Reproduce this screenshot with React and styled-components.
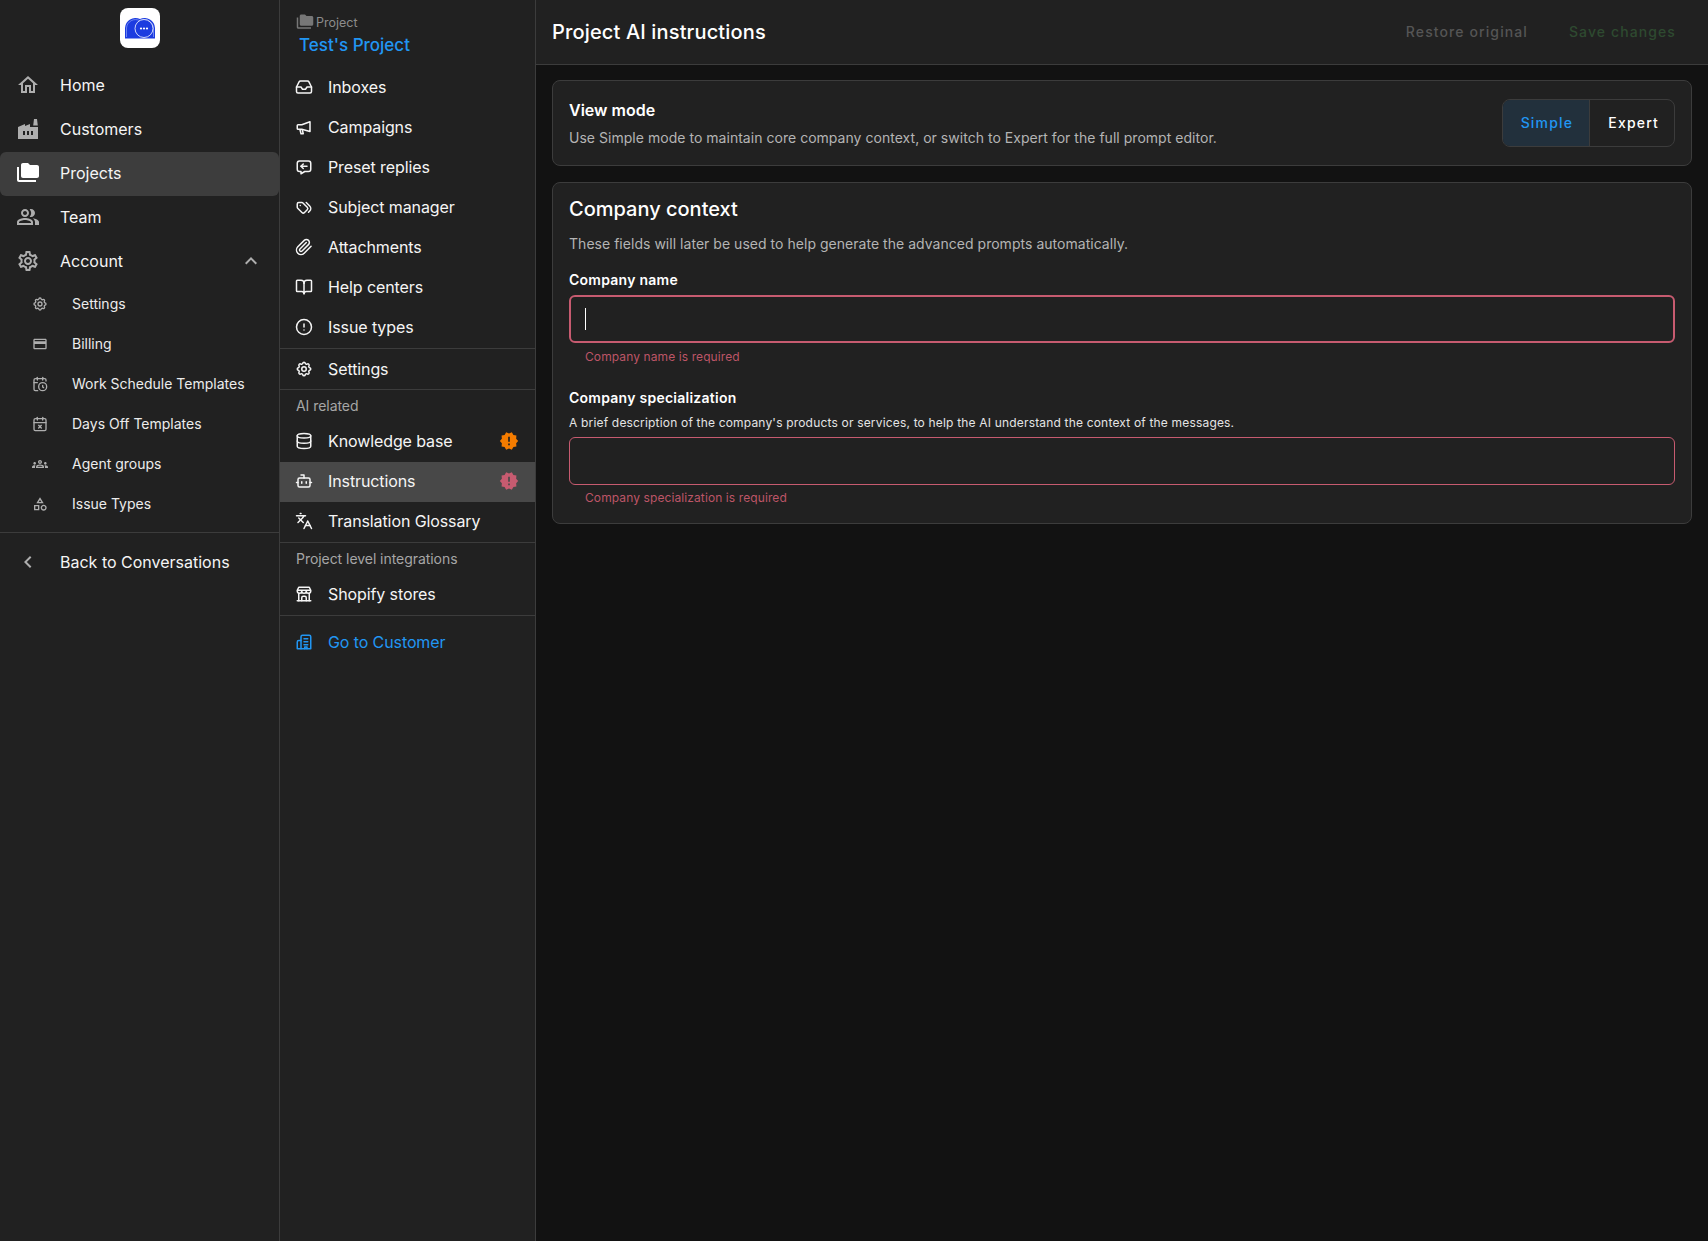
import React from "react"
import styled, { createGlobalStyle } from "styled-components"
import {
  MdOutlineHome,
  MdFactory,
  MdFolderCopy,
  MdOutlinePeopleAlt,
  MdOutlineSettings,
  MdExpandLess,
  MdOutlineCreditCard,
  MdOutlineGroups,
  MdOutlineCategory,
  MdChevronLeft,
  MdNewReleases,
} from "react-icons/md"
import { TbSettings, TbMessageReply, TbTags, TbBuildingStore } from "react-icons/tb"
import {
  LuInbox,
  LuBookOpen,
  LuDatabase,
  LuBot,
  LuLanguages,
  LuPaperclip,
  LuCircleAlert,
  LuCalendarClock,
  LuCalendarX,
} from "react-icons/lu"

const colors = {
  page: "#121212",
  panel: "#212121",
  line: "#3c3c3c",
  blue: "#2196f3",
  red: "#c75b70",
  orange: "#f57c00",
}

const GlobalStyle = createGlobalStyle`
  html, body, #root {
    margin: 0;
    height: 100%;
  }
  body {
    background: ${colors.page};
    color: #f5f5f5;
    font-family: Inter, "Liberation Sans", sans-serif;
  }
`

const Layout = styled.div`
  display: flex;
  height: 1241px;
  overflow: hidden;
`

const MainNav = styled.nav`
  width: 280px;
  flex: none;
  box-sizing: border-box;
  background: ${colors.panel};
  border-right: 1px solid ${colors.line};
  padding-top: 8px;
`

const LogoBox = styled.div`
  width: 40px;
  height: 40px;
  margin: 0 auto 16px;
  background: #fff;
  border-radius: 8px;
  display: flex;
  align-items: center;
  justify-content: center;
`

const NavItem = styled.a`
  display: flex;
  align-items: center;
  box-sizing: border-box;
  height: 44px;
  padding-bottom: 2px;
  font-size: 16px;
  line-height: 1;
  color: #f5f5f5;
  border-radius: 6px;
  background: ${props => (props.$active ? "#3d3d3d" : "transparent")};

  svg {
    width: 24px;
    height: 24px;
    margin-left: 16px;
    margin-right: 20px;
    flex: none;
    color: ${props => (props.$active ? "#fff" : "#aeaeae")};
  }
`

const Chevron = styled(MdExpandLess)`
  && {
    margin-left: auto;
    margin-right: 16px;
  }
`

const SubItem = styled.a`
  display: flex;
  align-items: center;
  height: 40px;
  font-size: 14px;
  line-height: 1;
  color: #ececec;

  svg {
    width: 16px;
    height: 16px;
    margin-left: 32px;
    margin-right: 24px;
    flex: none;
    color: #aeaeae;
  }
`

const NavDivider = styled.div`
  height: 1px;
  background: ${colors.line};
  margin: 8px 0;
`

const ProjectNav = styled.nav`
  width: 256px;
  flex: none;
  box-sizing: border-box;
  background: ${colors.panel};
  border-right: 1px solid ${colors.line};
`

const ProjectHead = styled.div`
  height: 67px;
  box-sizing: border-box;
  padding: 14px 0 0 16px;
`

const ProjectLabel = styled.div`
  display: flex;
  align-items: center;
  gap: 2px;
  height: 16px;
  font-size: 12.5px;
  color: #8c8c8c;

  svg {
    width: 18px;
    height: 18px;
    flex: none;
    color: #777;
  }
`

const ProjectName = styled.div`
  margin: 3px 0 0 3px;
  font-size: 17px;
  line-height: 24px;
  font-weight: 500;
  color: ${colors.blue};
`

const Group = styled.div`
  border-bottom: 1px solid ${colors.line};
  padding-bottom: ${props => props.$pad || 0}px;

  & + & > * {
    padding-bottom: 2px;
  }
`

const GroupLabel = styled.div`
  height: 32px;
  box-sizing: border-box;
  padding-left: 16px;
  display: flex;
  align-items: center;
  font-size: 14px;
  letter-spacing: -0.05px;
  color: #a6a6a6;
`

const ProjectItem = styled.a`
  display: flex;
  align-items: center;
  box-sizing: border-box;
  height: 40px;
  padding: 0 16px ${props => (props.$link ? "2px" : "0")};
  font-size: 16px;
  line-height: 1;
  letter-spacing: -0.1px;
  color: ${props => (props.$link ? colors.blue : "#f5f5f5")};
  background: ${props => (props.$active ? "#484848" : "transparent")};
  margin-top: ${props => (props.$link ? "7px" : "0")};

  > svg:first-child {
    width: 18px;
    height: 18px;
    margin-left: -1px;
    margin-right: 15px;
    flex: none;
  }
`

const Badge = styled(MdNewReleases)`
  width: 20px;
  height: 20px;
  margin-left: auto;
  color: ${props => props.$tone};
`

const Main = styled.main`
  flex: 1;
  min-width: 0;
  background: ${colors.page};
`

const Header = styled.header`
  height: 65px;
  box-sizing: border-box;
  background: ${colors.panel};
  border-bottom: 1px solid ${colors.line};
  padding: 0 32px 0 16px;
  display: flex;
  align-items: center;
  justify-content: space-between;
`

const Title = styled.h1`
  margin: 0;
  font-size: 20px;
  font-weight: 500;
  letter-spacing: 0.15px;
  color: #fff;
`

const HeaderActions = styled.div`
  display: flex;
  gap: 41px;
  margin-bottom: 2px;
`

const GhostButton = styled.span`
  font-size: 14px;
  font-weight: 500;
  letter-spacing: 1.1px;
  color: ${props => props.$tone};
`

const Content = styled.div`
  padding: 15px 16px;
  display: flex;
  flex-direction: column;
  gap: 16px;
`

const Card = styled.section`
  box-sizing: border-box;
  background: ${colors.panel};
  border: 1px solid ${colors.line};
  border-radius: 8px;
  padding: 0 16px;
`

const ModeCard = styled(Card)`
  height: 86px;
  display: flex;
  align-items: center;
  justify-content: space-between;
`

const ModeText = styled.div`
  padding-top: 1px;
`

const ModeTitle = styled.div`
  font-size: 16px;
  line-height: 22px;
  font-weight: 600;
  color: #fff;
`

const Muted = styled.p`
  margin: 7px 0 0;
  font-size: 14px;
  line-height: 20px;
  letter-spacing: 0.03px;
  color: #b4b4b4;
`

const Toggle = styled.div`
  display: flex;
  height: 48px;
  box-sizing: border-box;
  border: 1px solid ${colors.line};
  border-radius: 8px;
  overflow: hidden;
`

const ToggleOption = styled.button`
  border: 0;
  border-left: ${props => (props.$active ? "0" : `1px solid ${colors.line}`)};
  background: ${props => (props.$active ? "#22303c" : "transparent")};
  color: ${props => (props.$active ? colors.blue : "#fff")};
  font: 500 14px Inter, sans-serif;
  letter-spacing: 1.2px;
  padding: 0 ${props => (props.$active ? 16 : 15)}px 2px 18px;
`

const ContextCard = styled(Card)`
  padding-top: 11px;
  padding-bottom: 16px;
`

const ContextTitle = styled.h2`
  margin: 0;
  font-size: 20px;
  line-height: 30px;
  font-weight: 500;
  color: #fff;
`

const ContextDesc = styled(Muted)`
  margin-top: 10px;
`

const FieldLabel = styled.label`
  display: block;
  margin-top: ${props => props.$top}px;
  font-size: 14px;
  line-height: 20px;
  font-weight: 600;
  letter-spacing: 0.25px;
  color: #fff;
`

const FieldHelp = styled.div`
  margin: 6px 0 5px;
  font-size: 12px;
  line-height: 18px;
  letter-spacing: 0.18px;
  color: #e4e4e4;
`

const FieldBox = styled.div`
  height: 48px;
  box-sizing: border-box;
  margin-top: ${props => props.$top}px;
  padding-left: 14px;
  display: flex;
  align-items: center;
  border: ${props => (props.$focused ? 2 : 1)}px solid ${colors.red};
  border-radius: 6px;
`

const Caret = styled.span`
  width: 1px;
  height: 22px;
  background: #fff;
`

const FieldError = styled.div`
  margin: ${props => props.$top}px 0 0 16px;
  font-size: 12px;
  line-height: 18px;
  letter-spacing: 0.1px;
  color: #bd5567;
`

const Logo = () => (
  <svg width="32" height="24" viewBox="0 0 32 24">
    <path
      d="M1 22.5V12A10.5 10.5 0 0 1 16 3A10.5 10.5 0 0 1 31 12V22.5Z"
      fill="#1c3ce0"
    />
    <path
      d="M2.5 21V12A9 9 0 0 1 16 4.8A9 9 0 0 1 29.5 12V21"
      fill="none"
      stroke="#8ea0f5"
      strokeWidth="0.7"
    />
    <circle cx="20" cy="12.5" r="9" fill="#1c3ce0" stroke="#fff" strokeWidth="0.8" />
    <circle cx="17" cy="12.5" r="1.1" fill="#fff" />
    <circle cx="20" cy="12.5" r="1.1" fill="#fff" />
    <circle cx="23" cy="12.5" r="1.1" fill="#fff" />
  </svg>
)

const Megaphone = () => (
  <svg viewBox="0 0 24 24" fill="none" stroke="currentColor" strokeWidth="2" strokeLinejoin="round">
    <path d="M3 10a1 1 0 0 1 1-1h5l11-4v13L9 15H4a1 1 0 0 1-1-1z" />
    <path d="M6.5 15l1.5 6h3l-1.5-6" />
  </svg>
)

const CustomerBuilding = () => (
  <svg viewBox="0 0 24 24" fill="none" stroke="currentColor" strokeWidth="2" strokeLinejoin="round" strokeLinecap="round">
    <path d="M8 21V5a2 2 0 0 1 2-2h9a2 2 0 0 1 2 2v16z" />
    <path d="M8 10H5a2 2 0 0 0-2 2v9h5" />
    <path d="M12 7.5h5M12 11.5h5M12 15.5h5M13 21v-2.5h3V21" />
  </svg>
)

const accountLinks = [
  [TbSettings, "Settings"],
  [MdOutlineCreditCard, "Billing"],
  [LuCalendarClock, "Work Schedule Templates"],
  [LuCalendarX, "Days Off Templates"],
  [MdOutlineGroups, "Agent groups"],
  [MdOutlineCategory, "Issue Types"],
]

const projectLinks = [
  [LuInbox, "Inboxes"],
  [Megaphone, "Campaigns"],
  [TbMessageReply, "Preset replies"],
  [TbTags, "Subject manager"],
  [LuPaperclip, "Attachments"],
  [LuBookOpen, "Help centers"],
  [LuCircleAlert, "Issue types"],
]

const App = () => (
  <>
    <GlobalStyle />
    <Layout>
      <MainNav>
        <LogoBox>
          <Logo />
        </LogoBox>
        <NavItem><MdOutlineHome />Home</NavItem>
        <NavItem><MdFactory />Customers</NavItem>
        <NavItem $active><MdFolderCopy />Projects</NavItem>
        <NavItem><MdOutlinePeopleAlt />Team</NavItem>
        <NavItem>
          <MdOutlineSettings />
          Account
          <Chevron />
        </NavItem>
        {accountLinks.map(([Icon, label]) => (
          <SubItem key={label}>
            <Icon />
            {label}
          </SubItem>
        ))}
        <NavDivider />
        <NavItem><MdChevronLeft />Back to Conversations</NavItem>
      </MainNav>

      <ProjectNav>
        <ProjectHead>
          <ProjectLabel>
            <MdFolderCopy />
            Project
          </ProjectLabel>
          <ProjectName>Test's Project</ProjectName>
        </ProjectHead>
        <Group $pad={1}>
          {projectLinks.map(([Icon, label]) => (
            <ProjectItem key={label}>
              <Icon />
              {label}
            </ProjectItem>
          ))}
        </Group>
        <Group>
          <ProjectItem><TbSettings />Settings</ProjectItem>
        </Group>
        <Group>
          <GroupLabel>AI related</GroupLabel>
          <ProjectItem>
            <LuDatabase />
            Knowledge base
            <Badge $tone={colors.orange} />
          </ProjectItem>
          <ProjectItem $active>
            <LuBot />
            Instructions
            <Badge $tone={colors.red} />
          </ProjectItem>
          <ProjectItem><LuLanguages />Translation Glossary</ProjectItem>
        </Group>
        <Group>
          <GroupLabel>Project level integrations</GroupLabel>
          <ProjectItem><TbBuildingStore />Shopify stores</ProjectItem>
        </Group>
        <ProjectItem $link><CustomerBuilding />Go to Customer</ProjectItem>
      </ProjectNav>

      <Main>
        <Header>
          <Title>Project AI instructions</Title>
          <HeaderActions>
            <GhostButton $tone="#555555">Restore original</GhostButton>
            <GhostButton $tone="#2e4a30">Save changes</GhostButton>
          </HeaderActions>
        </Header>
        <Content>
          <ModeCard>
            <ModeText>
              <ModeTitle>View mode</ModeTitle>
              <Muted>
                Use Simple mode to maintain core company context, or switch to
                Expert for the full prompt editor.
              </Muted>
            </ModeText>
            <Toggle>
              <ToggleOption $active>Simple</ToggleOption>
              <ToggleOption>Expert</ToggleOption>
            </Toggle>
          </ModeCard>
          <ContextCard>
            <ContextTitle>Company context</ContextTitle>
            <ContextDesc>
              These fields will later be used to help generate the advanced
              prompts automatically.
            </ContextDesc>
            <FieldLabel $top={16}>Company name</FieldLabel>
            <FieldBox $top={5} $focused role="textbox">
              <Caret />
            </FieldBox>
            <FieldError $top={5}>Company name is required</FieldError>
            <FieldLabel $top={22}>Company specialization</FieldLabel>
            <FieldHelp>
              A brief description of the company's products or services, to help
              the AI understand the context of the messages.
            </FieldHelp>
            <FieldBox role="textbox" />
            <FieldError $top={4}>Company specialization is required</FieldError>
          </ContextCard>
        </Content>
      </Main>
    </Layout>
  </>
)

export default App
